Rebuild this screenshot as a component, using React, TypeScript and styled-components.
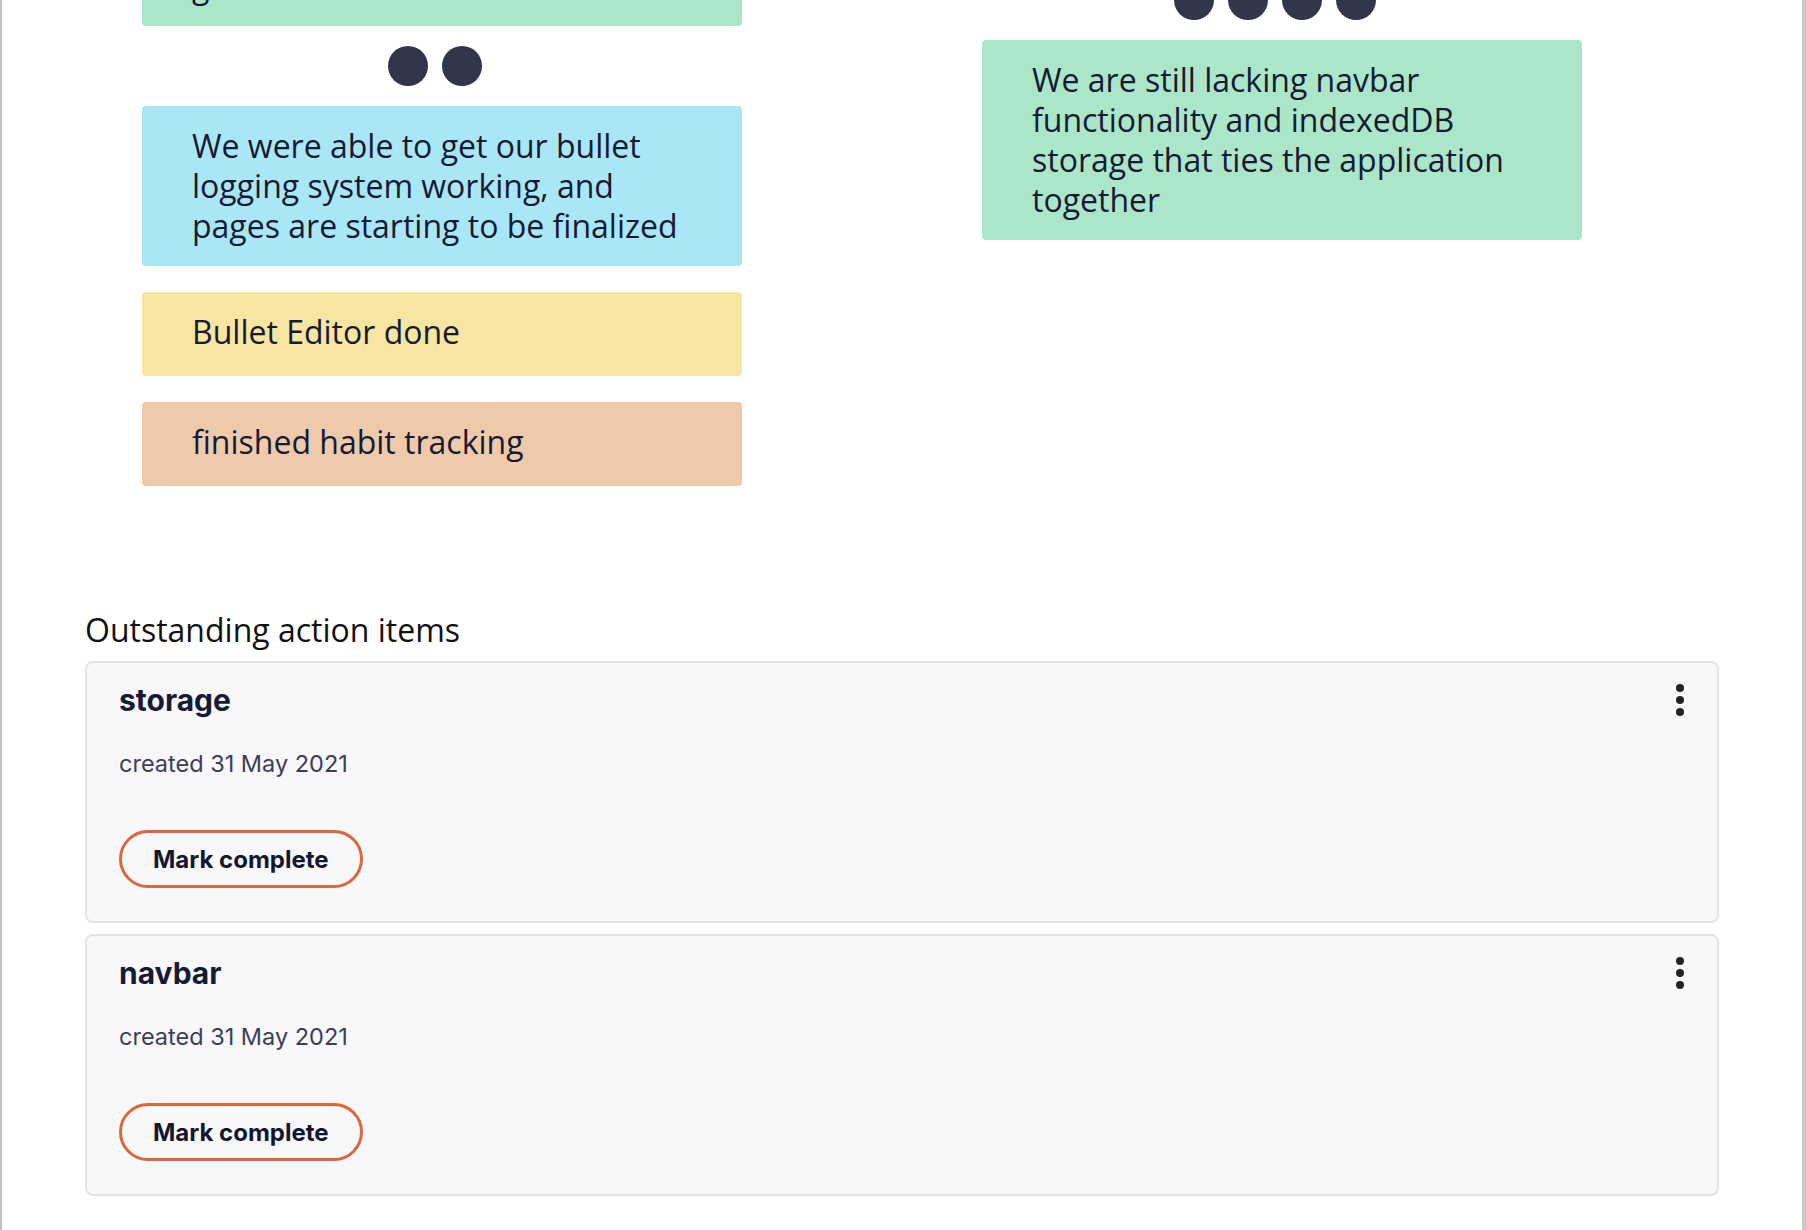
import React from "react";
import styled, { createGlobalStyle } from "styled-components";

const GlobalStyle = createGlobalStyle`
  html, body {
    margin: 0;
    padding: 0;
    background: #ffffff;
    overflow: hidden;
  }
  * { box-sizing: border-box; }
`;

const Frame = styled.div`
  width: 1806px;
  height: 1230px;
  overflow: hidden;
  border-left: 2px solid #c2c2c2;
  border-right: 4px solid #c9c9c9;
  background: #ffffff;
`;

const Board = styled.div`
  margin-top: -174px;
  padding-left: 140px;
  display: grid;
  grid-template-columns: 600px 600px;
  column-gap: 240px;
  align-items: start;
`;

const Column = styled.div<{ $offset?: number }>`
  display: flex;
  flex-direction: column;
  margin-top: ${(p) => p.$offset ?? 0}px;
`;

const noteColors = {
  green: "#abe6c9",
  blue: "#aae7f6",
  yellow: "#f7e5a2",
  peach: "#efcaaa",
};

const Note = styled.div<{ $color: keyof typeof noteColors }>`
  background: ${(p) => noteColors[p.$color]};
  border-radius: 4px;
  min-height: 84px;
  padding: 20px 50px 20px;
  margin-bottom: 26px;
  font-family: "Open Sans", "Noto Sans", sans-serif;
  font-size: 32px;
  line-height: 40px;
  color: #161a33;
  white-space: pre-line;
`;

const Votes = styled.div`
  display: flex;
  justify-content: center;
  margin: -6px 0 20px;
`;

const Vote = styled.span`
  width: 40px;
  height: 40px;
  border-radius: 50%;
  background: #31364a;
  margin-right: 14px;
`;

const Section = styled.section`
  padding: 97px 83px 0;
`;

const Heading = styled.h2`
  margin: 0 0 10px;
  font-family: "Open Sans", "Noto Sans", sans-serif;
  font-weight: 400;
  font-size: 32px;
  line-height: 42px;
  color: #111111;
`;

const ItemList = styled.div`
  display: flex;
  flex-direction: column;
  gap: 11px;
`;

const ItemCard = styled.div`
  height: 262px;
  background: #f8f8fa;
  border: 2px solid #e3e3ea;
  border-radius: 8px;
  padding: 13px 25px 0 32px;
  display: flex;
  flex-direction: column;
  align-items: flex-start;
`;

const ItemHeader = styled.div`
  align-self: stretch;
  height: 48px;
  display: flex;
  align-items: center;
  justify-content: space-between;
`;

const ItemTitle = styled.h3`
  margin: 0;
  font-family: Inter, "Noto Sans", sans-serif;
  font-weight: 700;
  font-size: 30px;
  line-height: 36px;
  color: #161b35;
`;

const MenuButton = styled.button`
  width: 24px;
  height: 48px;
  padding: 0;
  border: none;
  background: transparent;
  display: flex;
  color: #222222;
`;

const Created = styled.p`
  margin: 24px 0 0;
  font-family: Inter, "Noto Sans", sans-serif;
  font-size: 23.5px;
  line-height: 32px;
  color: #3b3f54;
`;

const CompleteButton = styled.button`
  margin-top: 50px;
  height: 58px;
  padding: 0 31px;
  border: 3px solid #d9683a;
  border-radius: 999px;
  background: transparent;
  font-family: Inter, "Noto Sans", sans-serif;
  font-weight: 700;
  font-size: 24px;
  color: #12162e;
`;

const KebabIcon = () => (
  <svg width="24" height="48" viewBox="0 0 24 48" fill="currentColor">
    <circle cx="12" cy="12" r="4" />
    <circle cx="12" cy="24" r="4" />
    <circle cx="12" cy="36" r="4" />
  </svg>
);

const VoteDots = ({ count }: { count: number }) => (
  <Votes>
    {Array.from({ length: count }).map((_, i) => (
      <Vote key={i} />
    ))}
  </Votes>
);

const items = [
  { title: "storage", created: "created 31 May 2021" },
  { title: "navbar", created: "created 31 May 2021" },
];

export default function App() {
  return (
    <>
      <GlobalStyle />
      <Frame>
        <Board>
          <Column>
            <Note $color="green">
              {"Daily standups kept the team\naligned and helped us stay\non top of our sprint\ngoals"}
            </Note>
            <VoteDots count={2} />
            <Note $color="blue">
              We were able to get our bullet logging system working, and pages are starting to be finalized
            </Note>
            <Note $color="yellow">Bullet Editor done</Note>
            <Note $color="peach">finished habit tracking</Note>
          </Column>
          <Column $offset={14}>
            <Note $color="blue">
              {"Merging branches was a\nchallenge at first"}
            </Note>
            <VoteDots count={4} />
            <Note $color="green">
              We are still lacking navbar functionality and indexedDB storage that ties the application together
            </Note>
          </Column>
        </Board>
        <Section>
          <Heading>Outstanding action items</Heading>
          <ItemList>
            {items.map((item) => (
              <ItemCard key={item.title}>
                <ItemHeader>
                  <ItemTitle>{item.title}</ItemTitle>
                  <MenuButton aria-label="More options">
                    <KebabIcon />
                  </MenuButton>
                </ItemHeader>
                <Created>{item.created}</Created>
                <CompleteButton>Mark complete</CompleteButton>
              </ItemCard>
            ))}
          </ItemList>
        </Section>
      </Frame>
    </>
  );
}
